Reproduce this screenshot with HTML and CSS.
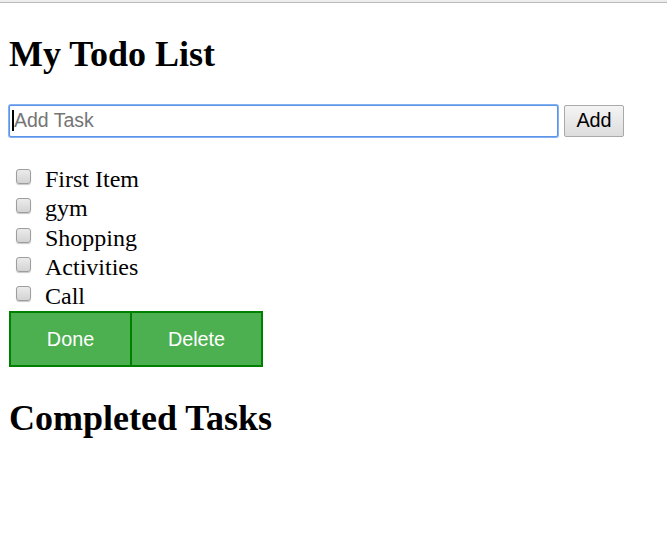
FILE: index.html
```html
<!DOCTYPE html>
<html lang="en">
<head>
<meta charset="utf-8">
<title>My Todo List</title>
<link rel="stylesheet" href="styles.css">
</head>
<body>
<div class="chrome"></div>
<main class="app">
  <h1 class="title">My Todo List</h1>
  <form class="add-row">
    <div class="field">
      <input class="task-input" type="text" placeholder="Add Task">
      <span class="caret"></span>
    </div>
    <button class="add-btn" type="button">Add</button>
  </form>
  <ul class="tasks">
    <li class="task"><input class="check" type="checkbox"><span>First Item</span></li>
    <li class="task"><input class="check" type="checkbox"><span>gym</span></li>
    <li class="task"><input class="check" type="checkbox"><span>Shopping</span></li>
    <li class="task"><input class="check" type="checkbox"><span>Activities</span></li>
    <li class="task"><input class="check" type="checkbox"><span>Call</span></li>
  </ul>
  <div class="actions">
    <button class="act done" type="button">Done</button>
    <button class="act delete" type="button">Delete</button>
  </div>
  <h1 class="title completed">Completed Tasks</h1>
</main>
</body>
</html>
```
FILE: styles.css
```css
html, body {
  margin: 0;
  padding: 0;
  background: #ffffff;
}

body {
  font-family: "Liberation Serif", "Times New Roman", serif;
  color: #000;
}

.chrome {
  height: 2px;
  background: #ededed;
  border-bottom: 1px solid #bababa;
}

.app {
  padding: 0 9px;
}

.title {
  font-family: "Liberation Serif", "Times New Roman", serif;
  font-weight: bold;
  font-size: 36px;
  line-height: 39px;
  margin: 31.6px 0 31.4px;
}

.add-row {
  display: flex;
  align-items: flex-start;
  gap: 6px;
  margin: 0;
}

.field {
  position: relative;
  width: 549px;
  height: 32px;
}

.task-input {
  box-sizing: border-box;
  width: 100%;
  height: 32px;
  margin: 0;
  padding: 0 4px;
  border: 1px solid #5b95ea;
  border-radius: 2px;
  box-shadow: 0 0 0 1px rgba(94, 150, 234, 0.75);
  outline: none;
  font-family: "Liberation Sans", Arial, sans-serif;
  font-size: 19.5px;
  color: #000;
}

.task-input::placeholder {
  color: #757575;
}

.caret {
  position: absolute;
  left: 3px;
  top: 5px;
  width: 2px;
  height: 21px;
  background: #000;
}

.add-btn {
  box-sizing: border-box;
  width: 60px;
  height: 32px;
  margin: 0;
  padding: 0;
  border: 1px solid #a9a9a9;
  border-radius: 2px;
  background: linear-gradient(#f4f4f4, #dddddd);
  font-family: "Liberation Sans", Arial, sans-serif;
  font-size: 19.8px;
  color: #000;
}

.tasks {
  list-style: none;
  margin: 28px 0 0;
  padding: 0;
}

.task {
  display: flex;
  align-items: flex-start;
  height: 29.3px;
  font-size: 24px;
  line-height: 29.3px;
}

.check {
  appearance: none;
  -webkit-appearance: none;
  box-sizing: border-box;
  width: 15px;
  height: 15px;
  margin: 4px 14px 0 7px;
  border: 1px solid #9d9d9d;
  border-radius: 3px;
  background: linear-gradient(#ebebeb, #d3d3d3);
  box-shadow: 0 1px 1px rgba(0, 0, 0, 0.22);
}

.actions {
  display: flex;
}

.act {
  box-sizing: border-box;
  height: 56px;
  margin: 0;
  padding: 0;
  border: 2px solid #008000;
  background: #4caf50;
  color: #ffffff;
  font-family: "Liberation Sans", Arial, sans-serif;
  font-size: 19.8px;
  text-align: center;
}

.done {
  width: 121px;
  border-right: 0;
}

.delete {
  width: 133px;
}

.completed {
  margin-top: 32px;
}
```
